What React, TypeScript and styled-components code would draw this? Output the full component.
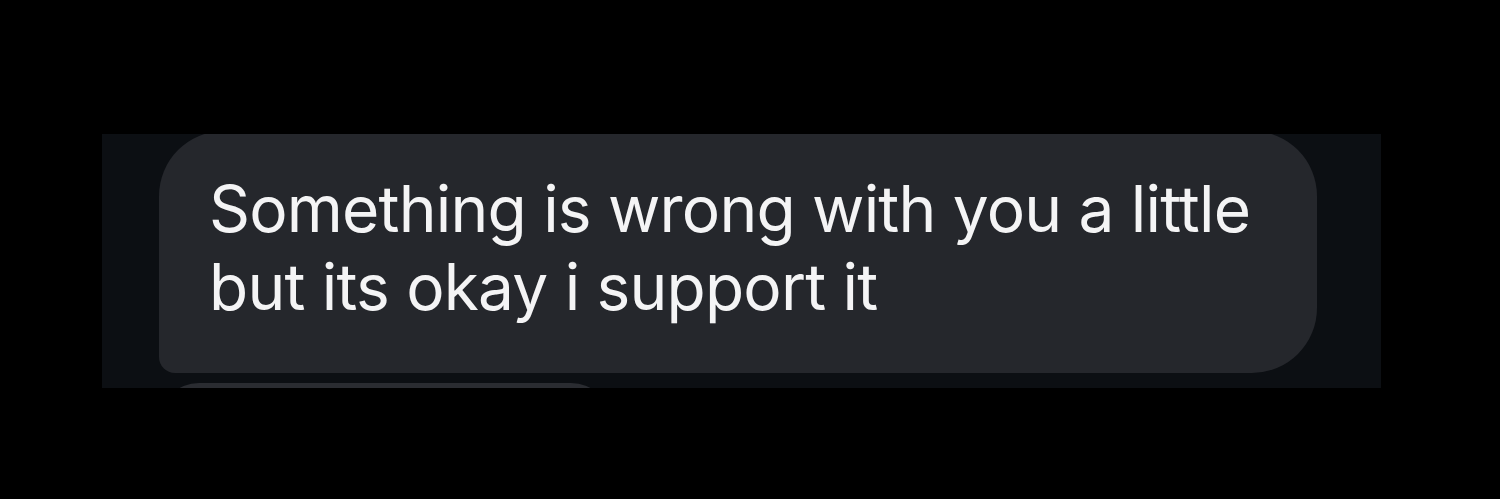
import styled, { createGlobalStyle } from "styled-components";

const GlobalStyle = createGlobalStyle`
    html, body {
        margin: 0;
        padding: 0;
        background: #000;
    }
    #root {
        height: 499px;
    }
`

const Page = styled.main`
    height: 499px;
    box-sizing: border-box;
    padding: 134px 0 0 102px;
    background: #000;
`

const Thread = styled.section`
    width: 1279px;
    height: 254px;
    background: #0c0f13;
    overflow: hidden;
    display: flex;
    flex-direction: column;
    gap: 10px;
    padding-left: 57px;
    box-sizing: border-box;
`

interface BubbleProps {
    width?: number
}

const Bubble = styled.div<BubbleProps>`
    width: ${({ width }) => width ? `${width}px` : 'fit-content'};
    background: #25272c;
    color: #f4f4f5;
    font-family: Inter, "Noto Sans", sans-serif;
    font-size: 64px;
    line-height: 78px;
    letter-spacing: -0.8px;
    border-radius: 65px 65px 65px 16px;
    box-sizing: border-box;
    flex-shrink: 0;
    &:first-child {
        margin-top: -3px;
    }
`

const Message = styled.p`
    margin: 0;
    padding: 39px 0 47px 50px;
    white-space: pre;
`

const Stub = styled(Bubble)`
    height: 80px;
    background: #2a2c31;
    border-radius: 40px;
`

const App = () => {
    return (
        <Page>
            <GlobalStyle />
            <Thread>
                <Bubble width={1158}>
                    <Message>
                        {"Something is wrong with you a little\nbut its okay i support it"}
                    </Message>
                </Bubble>
                <Stub width={452} />
            </Thread>
        </Page>
    )
}

export default App;
